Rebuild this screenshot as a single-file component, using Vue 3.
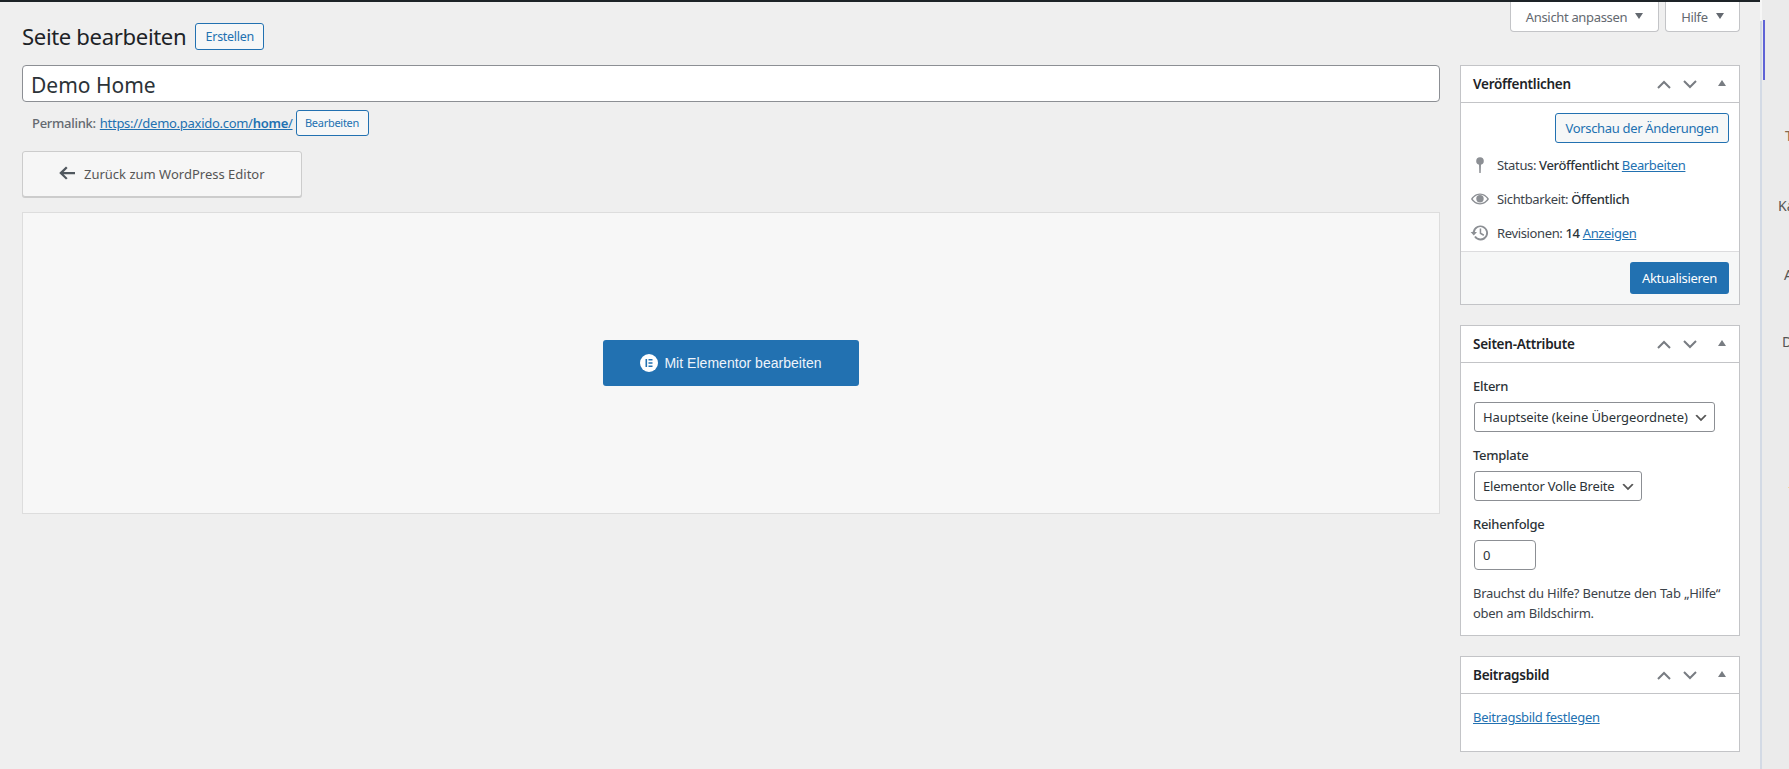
<script setup>
const chevronBg = "url(\"data:image/svg+xml;charset=UTF-8,%3Csvg width='20' height='20' xmlns='http://www.w3.org/2000/svg'%3E%3Cpath d='M5 6l5 5 5-5 2 1-7 7-7-7 2-1z' fill='%23555'/%3E%3C/svg%3E\")";
const rows = [
  { id: "pin", label: "Status:", value: "Veröffentlicht", link: "Bearbeiten" },
  { id: "eye", label: "Sichtbarkeit:", value: "Öffentlich", link: "" },
  { id: "rev", label: "Revisionen:", value: "14", link: "Anzeigen" },
];
</script>

<template>
  <div class="page">
    <div class="main">
      <div class="adminbar"></div>
      <div class="topline">
        <div class="headline">
          <h1>Seite bearbeiten</h1>
          <a class="btn-outline add">Erstellen</a>
        </div>
        <div class="screen-meta">
          <span class="meta-tab opts">Ansicht anpassen<i class="tri"></i></span>
          <span class="meta-tab help">Hilfe<i class="tri"></i></span>
        </div>
      </div>
      <div class="columns">
        <div class="content">
          <input class="title" type="text" value="Demo Home" />
          <div class="permalink">
            <span class="plabel">Permalink:</span>
            <a class="link url">https://demo.paxido.com/<b>home</b>/</a>
            <a class="btn-outline small">Bearbeiten</a>
          </div>
          <a class="back">
            <svg class="arrow" width="18" height="18" viewBox="0 0 18 18"><path d="M8 2.500 9.600 4 5.600 8H17v2.200H5.600l4 4L8 15.600 1.200 9z" fill="#50575e"/></svg>
            <span>Zurück zum WordPress Editor</span>
          </a>
          <div class="editor">
            <a class="el-btn">
              <svg class="el-logo" width="18" height="18" viewBox="0 0 18 18">
                <circle cx="9" cy="9" r="9" fill="#fff"/>
                <path d="M5.500 5h1.600v8H5.500zM8.500 5h4v1.500h-4zM8.500 8.200h4v1.500h-4zM8.500 11.500h4V13h-4z" fill="#2271b1"/>
              </svg>
              <span>Mit Elementor bearbeiten</span>
            </a>
          </div>
        </div>

        <aside class="side">
          <section class="box">
            <header class="box-head">
              <h2>Veröffentlichen</h2>
              <div class="handles">
                <svg width="14" height="9" viewBox="0 0 14 9"><path d="M1 8l6-6 6 6" fill="none" stroke="#787c82" stroke-width="2"/></svg>
                <svg width="14" height="9" viewBox="0 0 14 9"><path d="M1 1l6 6 6-6" fill="none" stroke="#787c82" stroke-width="2"/></svg>
                <svg class="toggle" width="8" height="6" viewBox="0 0 8 6"><path d="M4 0l4 6H0z" fill="#787c82"/></svg>
              </div>
            </header>
            <div class="preview-row"><a class="btn-outline preview">Vorschau der Änderungen</a></div>
            <div v-for="r in rows" :key="r.id" class="misc">
              <span class="misc-icon">
                <svg v-if="r.id === 'pin'" width="20" height="20" viewBox="0 0 20 20"><circle cx="10" cy="6" r="3.800" fill="#8c8f94"/><path d="M9 9h2l-.3 9H9.300z" fill="#8c8f94"/></svg>
                <svg v-else-if="r.id === 'eye'" width="20" height="20" viewBox="0 0 20 20"><path d="M10 4.500c4.200 0 7.500 3 9 5.500-1.500 2.500-4.800 5.500-9 5.500S2.500 12.500 1 10c1.500-2.500 4.800-5.500 9-5.500zm0 1.300C6.900 5.800 4.200 7.800 2.700 10c1.500 2.200 4.200 4.200 7.300 4.200s5.800-2 7.300-4.200c-1.500-2.200-4.200-4.200-7.300-4.200z" fill="#8c8f94"/><circle cx="10" cy="9.700" r="3.700" fill="#8c8f94"/></svg>
                <svg v-else width="20" height="20" viewBox="0 0 20 20"><path d="M10.500 2.500a7.500 7.500 0 1 1-6.300 11.500l1.500-1a5.700 5.700 0 1 0-.9-4.100H7l-3.200 3.700L.6 8.900h2A7.500 7.500 0 0 1 10.500 2.500z" fill="#8c8f94"/><path d="M9.700 5.500h1.500v4.300l3 1.800-.8 1.300-3.700-2.200z" fill="#8c8f94"/></svg>
              </span>
              <span class="misc-text">{{ r.label }} <b>{{ r.value }}</b> <a v-if="r.link" class="link">{{ r.link }}</a></span>
            </div>
            <footer class="actions"><a class="btn-primary">Aktualisieren</a></footer>
          </section>

          <section class="box">
            <header class="box-head">
              <h2>Seiten-Attribute</h2>
              <div class="handles">
                <svg width="14" height="9" viewBox="0 0 14 9"><path d="M1 8l6-6 6 6" fill="none" stroke="#787c82" stroke-width="2"/></svg>
                <svg width="14" height="9" viewBox="0 0 14 9"><path d="M1 1l6 6 6-6" fill="none" stroke="#787c82" stroke-width="2"/></svg>
                <svg class="toggle" width="8" height="6" viewBox="0 0 8 6"><path d="M4 0l4 6H0z" fill="#787c82"/></svg>
              </div>
            </header>
            <div class="attrs">
              <label class="lab">Eltern</label>
              <select class="sel sel-a" :style="{ backgroundImage: chevronBg }"><option>Hauptseite (keine Übergeordnete)</option></select>
              <label class="lab">Template</label>
              <select class="sel sel-b" :style="{ backgroundImage: chevronBg }"><option>Elementor Volle Breite</option></select>
              <label class="lab">Reihenfolge</label>
              <input class="num" type="number" value="0" />
              <p class="hint">Brauchst du Hilfe? Benutze den Tab „Hilfe“ oben am Bildschirm.</p>
            </div>
          </section>

          <section class="box">
            <header class="box-head">
              <h2>Beitragsbild</h2>
              <div class="handles">
                <svg width="14" height="9" viewBox="0 0 14 9"><path d="M1 8l6-6 6 6" fill="none" stroke="#787c82" stroke-width="2"/></svg>
                <svg width="14" height="9" viewBox="0 0 14 9"><path d="M1 1l6 6 6-6" fill="none" stroke="#787c82" stroke-width="2"/></svg>
                <svg class="toggle" width="8" height="6" viewBox="0 0 8 6"><path d="M4 0l4 6H0z" fill="#787c82"/></svg>
              </div>
            </header>
            <div class="thumb"><a class="link">Beitragsbild festlegen</a></div>
          </section>
        </aside>
      </div>
    </div>

    <div class="rail">
      <div class="rail-line"><i class="cap"></i><i class="rest"></i></div>
      <div class="rail-body">
        <i class="rail-bar"></i>
        <span class="rl r-t">T</span>
        <span class="rl r-ka">Ka</span>
        <span class="rl r-a">A</span>
        <span class="rl r-d">D</span>
        <i class="rail-dot"></i>
      </div>
    </div>
  </div>
</template>

<style>
html, body { margin: 0; overflow: hidden; background: #efefef; }
</style>

<style scoped>
.page {
  display: flex;
  height: 769px;
  overflow: hidden;
  font-family: "Noto Sans", "Open Sans", sans-serif;
  font-size: 13px;
  line-height: 20px;
  letter-spacing: -0.28px;
  color: #3c434a;
  background: #efefef;
}
.main { width: 1760px; flex: none; }
.adminbar { height: 2px; background: #1d2327; }

.topline { display: flex; justify-content: space-between; height: 63px; }
.headline { display: flex; align-items: flex-start; padding: 21px 0 0 22px; }
h1 {
  margin: 0;
  font-size: 22.100px;
  font-weight: 400;
  line-height: 27px;
  letter-spacing: -0.35px;
  color: #1d2327;
}
.btn-outline {
  box-sizing: border-box;
  display: inline-flex;
  align-items: center;
  justify-content: center;
  border: 1px solid #2271b1;
  border-radius: 3px;
  background: #f6f7f7;
  color: #2271b1;
}
.add { width: 69px; height: 27px; margin-left: 9px; font-size: 12.500px; }

.screen-meta { display: flex; gap: 6px; padding-right: 20px; }
.meta-tab {
  box-sizing: border-box;
  display: flex;
  align-items: center;
  justify-content: center;
  height: 30px;
  background: #fff;
  border: 1px solid #c3c4c7;
  border-top: 0;
  border-radius: 0 0 4px 4px;
  color: #646970;
  letter-spacing: -0.33px;
}
.opts { width: 149px; }
.help { width: 75px; }
.tri {
  width: 0; height: 0;
  margin: -2px 0 0 8px;
  border-left: 4px solid transparent;
  border-right: 4px solid transparent;
  border-top: 6px solid #646970;
}

.columns { display: flex; gap: 20px; padding-left: 22px; }
.content { width: 1418px; flex: none; }
.title {
  box-sizing: border-box;
  display: block;
  width: 100%;
  height: 37px;
  margin: 0;
  padding: 2px 8px 0;
  border: 1px solid #8c8f94;
  border-radius: 4px;
  background: #fff;
  font: inherit;
  font-size: 21px;
  letter-spacing: 0;
  color: #2c3338;
  outline: none;
}
.permalink {
  display: flex;
  align-items: center;
  height: 26px;
  margin-top: 8px;
  padding-left: 10px;
  color: #646970;
}
.plabel { font-weight: 500; }
.url { margin-left: 4px; }
.url b { font-weight: 600; }
.small { width: 73px; height: 26px; margin-left: 3px; font-size: 11px; }
.link { color: #2271b1; text-decoration: underline; }
.back {
  box-sizing: border-box;
  display: flex;
  align-items: center;
  width: 280px;
  height: 46px;
  margin-top: 15px;
  padding-left: 35px;
  background: #f6f6f6;
  border: 1px solid #ccc;
  border-radius: 3px;
  box-shadow: 0 1px 0 #ccc;
  color: #555;
  letter-spacing: 0;
}
.arrow { margin-right: 8px; margin-top: -3px; }
.editor {
  box-sizing: border-box;
  display: flex;
  align-items: center;
  justify-content: center;
  height: 302px;
  margin-top: 15px;
  background: #f7f7f7;
  border: 1px solid #ddd;
}
.el-btn {
  display: flex;
  align-items: center;
  justify-content: center;
  width: 256px;
  height: 46px;
  border-radius: 3px;
  background: #2271b1;
  color: #eef4fb;
  font-family: "Liberation Sans", Arial, sans-serif;
  font-size: 14px;
  letter-spacing: 0.03px;
}
.el-logo { margin-right: 6px; }

.side { width: 280px; flex: none; display: flex; flex-direction: column; gap: 20px; }
.box { box-sizing: border-box; background: #fff; border: 1px solid #c3c4c7; }
.box-head {
  display: flex;
  align-items: center;
  justify-content: space-between;
  height: 36px;
  padding: 0 13px 0 12px;
  border-bottom: 1px solid #c3c4c7;
}
h2 {
  margin: 0;
  font-size: 13.500px;
  font-weight: 600;
  letter-spacing: -0.25px;
  color: #1d2327;
}
.handles { display: flex; align-items: center; }
.handles svg { margin-left: 12px; }
.handles .toggle { margin-left: 21px; margin-top: -2px; }

.preview-row { display: flex; justify-content: flex-end; padding: 10px 10px 5px; }
.preview { width: 174px; height: 30px; letter-spacing: -0.33px; }
.misc { display: flex; align-items: center; height: 34px; padding-left: 9px; }
.misc-icon { display: flex; width: 20px; margin-right: 7px; }
.misc-text { letter-spacing: -0.36px; }
.misc-text b { font-weight: 500; color: #2c3338; }
.actions {
  display: flex;
  justify-content: flex-end;
  padding: 10px;
  background: #f6f7f7;
  border-top: 1px solid #dcdcde;
  margin-top: 1px;
}
.btn-primary {
  display: flex;
  align-items: center;
  justify-content: center;
  width: 99px;
  height: 32px;
  border-radius: 3px;
  background: #2271b1;
  color: #fff;
  letter-spacing: -0.33px;
}

.attrs { display: flex; flex-direction: column; align-items: flex-start; padding: 13px 12px 12px; }
.lab { display: block; line-height: 20px; font-weight: 500; color: #2c3338; margin-top: 13px; margin-bottom: 6px; }
.lab:first-child { margin-top: 0; }
.sel {
  box-sizing: border-box;
  appearance: none;
  height: 30px;
  margin: 0 0 0 1px;
  padding: 0 24px 0 8px;
  border: 1px solid #8c8f94;
  border-radius: 3px;
  background-color: #fff;
  background-repeat: no-repeat;
  background-position: right 5px top 55%;
  background-size: 16px 16px;
  font: inherit;
  color: #2c3338;
  letter-spacing: -0.1px;
}
.sel-b { letter-spacing: -0.2px; }
.sel-a { width: 241px; }
.sel-b { width: 168px; }
.num {
  box-sizing: border-box;
  width: 62px;
  height: 30px;
  margin: 0 0 0 1px;
  padding: 0 8px;
  border: 1px solid #8c8f94;
  border-radius: 4px;
  background: #fff;
  font: inherit;
  color: #2c3338;
}
.hint { margin: 13px 0 0; width: 254px; color: #3c434a; letter-spacing: -0.28px; word-spacing: 0.3px; }
.thumb { padding: 13px 12px 24px; letter-spacing: -0.3px; }

.rail { flex: 1; display: flex; background: #ebebeb; overflow: hidden; }
.rail-line { display: flex; flex-direction: column; width: 2px; flex: none; }
.cap { display: block; height: 21px; background: #f6f6f6; }
.rest { display: block; flex: 1; background: #d3dae5; }
.rail-body { display: flex; flex-direction: column; align-items: flex-start; flex: 1; padding: 20px 0 0 1px; min-width: 0; }
.rail-bar { display: block; width: 2px; height: 60px; background: #5f63d6; }
.rl { line-height: 20px; font-size: 14px; color: #555; letter-spacing: 0; }
.r-t { margin: 46px 0 0 22px; color: #86684e; }
.r-ka { margin: 50px 0 0 15px; }
.r-a { margin: 49px 0 0 21px; }
.r-d { margin: 47px 0 0 19px; }
.rail-dot { display: block; width: 2px; height: 1px; margin: 135px 0 0 25px; background: #f0d9a0; }
</style>
